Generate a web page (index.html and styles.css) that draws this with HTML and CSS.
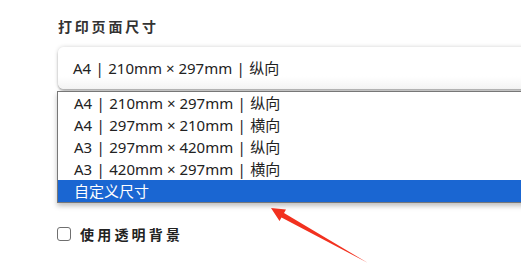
FILE: index.html
```html
<!DOCTYPE html>
<html lang="zh">
<head>
<meta charset="utf-8">
<link rel="stylesheet" href="styles.css">
</head>
<body>
<div class="page">
  <div class="label">打印页面尺寸</div>
  <div class="select">A4 <span class="sep">|</span> 210mm × 297mm <span class="sep">|</span> 纵向</div>
  <ul class="dropdown">
    <li>A4 <span class="sep">|</span> 210mm × 297mm <span class="sep">|</span> 纵向</li>
    <li>A4 <span class="sep">|</span> 297mm × 210mm <span class="sep">|</span> 横向</li>
    <li>A3 <span class="sep">|</span> 297mm × 420mm <span class="sep">|</span> 纵向</li>
    <li>A3 <span class="sep">|</span> 420mm × 297mm <span class="sep">|</span> 横向</li>
    <li class="selected">自定义尺寸</li>
  </ul>
  <label class="check"><span class="box"></span><span class="check-text">使用透明背景</span></label>
</div>
<svg class="arrow" width="521" height="272" viewBox="0 0 521 272">
  <polygon points="271,208 286,209.5 284,213 368,263 281.5,217.5 279.5,221" fill="#f2311f"/>
</svg>
</body>
</html>
```
FILE: styles.css
```css
html, body {
  margin: 0;
  padding: 0;
  background: #fff;
  overflow: hidden;
  width: 521px;
  height: 272px;
}
body {
  font-family: "Noto Sans", "Noto Sans CJK SC", sans-serif;
  color: #222;
  position: relative;
}
.page {
  padding: 16px 0 0 57px;
}
.label {
  font-size: 14px;
  line-height: 20px;
  font-weight: bold;
  letter-spacing: 2.8px;
  color: #333;
  padding-left: 1px;
  font-family: "Noto Sans CJK SC", sans-serif;
}
.select {
  margin-top: 11px;
  margin-left: 1px;
  width: 500px;
  height: 42px;
  box-sizing: border-box;
  border-radius: 6px;
  background: linear-gradient(#fff 70%, #f3f3f3);
  box-shadow: 0 0 4px rgba(0,0,0,0.18), 0 2px 2px rgba(0,0,0,0.25);
  font-size: 15px;
  line-height: 42px;
  padding-left: 15px;
  white-space: nowrap;
}
.sep {
  margin: 0 0.5px;
}
.dropdown {
  list-style: none;
  margin: 2px 0 0 0;
  padding: 0;
  width: 500px;
  border: 1px solid #777;
  border-right: none;
  box-shadow: 0 3px 5px rgba(0,0,0,0.25);
  background: #fff;
}
.dropdown li {
  height: 22px;
  line-height: 22px;
  font-size: 15px;
  padding-left: 16px;
  white-space: nowrap;
}
.dropdown li.selected {
  background: #1a66d2;
  color: #fff;
}
.check {
  display: flex;
  align-items: center;
  margin-top: 23px;
  height: 15px;
}
.box {
  width: 14px;
  height: 14px;
  box-sizing: border-box;
  border: 1.5px solid #6f6f6f;
  border-radius: 3px;
  background: #fff;
}
.check-text {
  margin-left: 9px;
  font-size: 14px;
  font-weight: bold;
  letter-spacing: 3.2px;
  color: #222;
  font-family: "Noto Sans CJK SC", sans-serif;
}
.arrow {
  position: absolute;
  left: 0;
  top: 0;
  pointer-events: none;
}
```
